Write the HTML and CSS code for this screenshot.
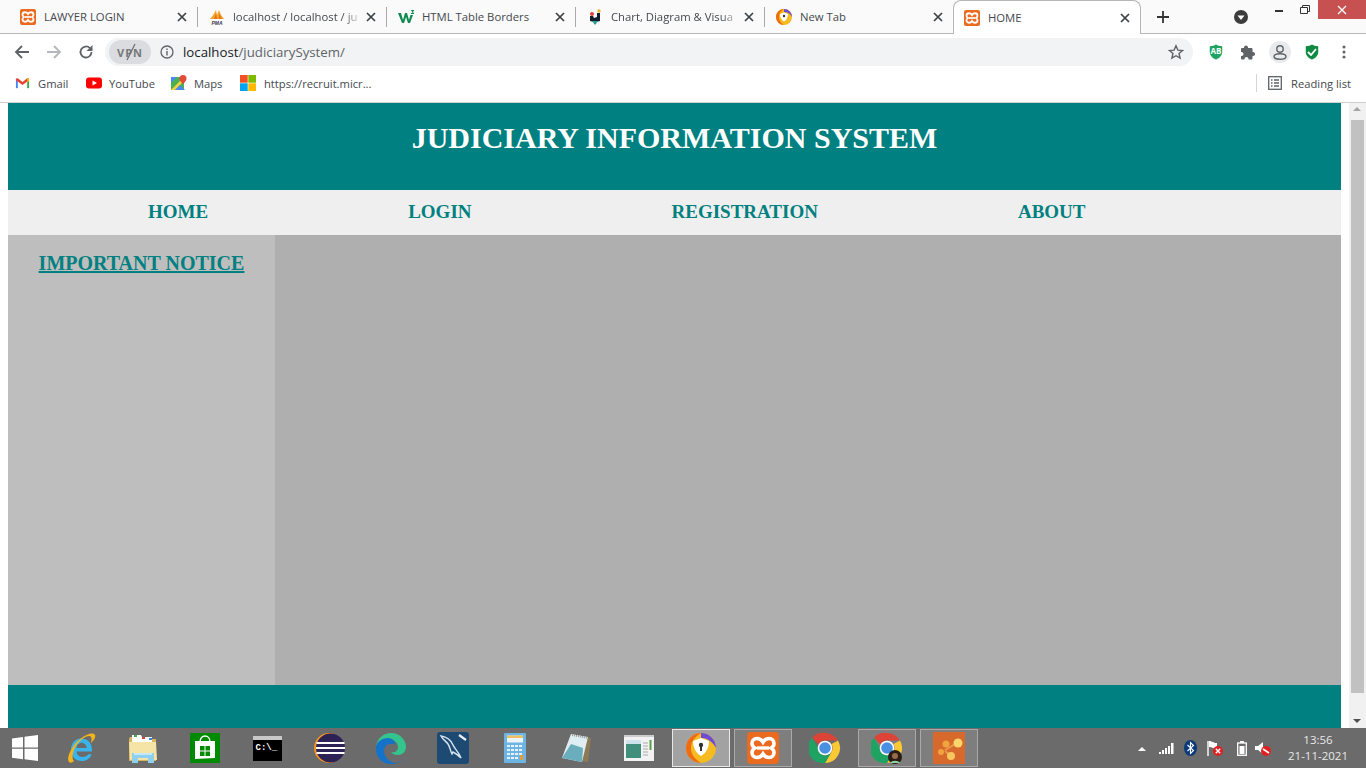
FILE: index.html
```html
<!DOCTYPE html>
<html lang="en">
<head>
<meta charset="utf-8">
<title>HOME</title>
<link rel="stylesheet" href="styles.css">
</head>
<body>
<svg class="defs" width="0" height="0" aria-hidden="true">
  <symbol id="xampp" viewBox="0 0 32 32">
    <rect width="32" height="32" rx="4" fill="#ea6b1f"/>
    <path d="M10 6.500c3 0 4.500 1 6 3.500 1.500-2.500 3-3.500 6-3.500 3.500 0 5 2.500 5 5 0 2-1 3.500-3 4.500 2 1 3 2.500 3 4.500 0 2.500-1.500 5-5 5-3 0-4.500-1-6-3.500-1.500 2.500-3 3.500-6 3.500-3.500 0-5-2.500-5-5 0-2 1-3.500 3-4.500-2-1-3-2.500-3-4.500 0-2.500 1.500-5 5-5z" fill="none" stroke="#fff" stroke-width="3.600"/>
    <path d="M10 16h12" stroke="#fff" stroke-width="3.400"/>
  </symbol>
  <symbol id="chrome" viewBox="0 0 32 32">
    <path d="M16 1a15 15 0 0 1 13 7.500H16a7.500 7.500 0 0 0-6.500 3.750L3 5.800A15 15 0 0 1 16 1z" fill="#db4437"/>
    <path d="M29 8.500A15 15 0 0 1 16 31l6.500-11.250A7.500 7.500 0 0 0 22.500 12z" fill="#fcc934"/>
    <path d="M3 5.800l6.500 11.250A7.500 7.500 0 0 0 16 23.500c2.500 0 5-1.300 6.500-3.750L16 31A15 15 0 0 1 3 5.800z" fill="#1ea362"/>
    <circle cx="16" cy="16" r="7.300" fill="#fff"/><circle cx="16" cy="16" r="5.800" fill="#4a90e2"/>
  </symbol>
  <symbol id="shield" viewBox="0 0 16 18">
    <path d="M1 2.500C4 2.500 6 1.500 8 .5c2 1 4 2 7 2v6.500c0 4-3 7-7 8.500-4-1.500-7-4.500-7-8.500z"/>
  </symbol>
  <symbol id="close" viewBox="0 0 10 10">
    <path d="M1 1l8 8M9 1l-8 8" stroke="#3c4043" stroke-width="1.700" fill="none"/>
  </symbol>
</svg>

<header class="tabstrip">
  <div class="tab"><svg class="fav"><use href="#xampp"/></svg><span class="tab-title">LAWYER LOGIN</span><svg class="tab-x"><use href="#close"/></svg></div>
  <div class="tab">
    <svg class="fav" viewBox="0 0 16 16"><path d="M1 10C3 8 5 5 7 1l1 5 2-5 2 5 3 4z" fill="#f5a62a"/><path d="M5 10l2-6 1 6zM10 10V4l3 6z" fill="#e9701b"/><text class="pma" x="8" y="15.500" text-anchor="middle">PMA</text></svg>
    <span class="tab-title tab-cut">localhost / localhost / ju</span><svg class="tab-x"><use href="#close"/></svg></div>
  <div class="tab">
    <svg class="fav" viewBox="0 0 16 16"><path d="M0 4h3l2 7 2-7h2l2 7 1.500-5H15l-3 8H10L8 8l-2 6H4z" fill="#0e8a4f"/><path d="M13 1h3v1l-1.500 1L16 4v1h-3V4h1.500z" fill="#0e8a4f"/></svg>
    <span class="tab-title">HTML Table Borders</span><svg class="tab-x"><use href="#close"/></svg></div>
  <div class="tab">
    <svg class="fav" viewBox="0 0 16 16"><circle cx="12" cy="2" r="1.700" fill="#f0b429"/><circle cx="5" cy="5" r="2" fill="#e0413f"/><path d="M3 7h3l1 2 3-1V4h3v8l-4 1v2H7v-2l-4-1z" fill="#14202e"/><path d="M5 12h6l-3 4z" fill="#2aa198"/></svg>
    <span class="tab-title tab-cut">Chart, Diagram &amp; Visua</span><svg class="tab-x"><use href="#close"/></svg></div>
  <div class="tab tab-last">
    <svg class="fav" viewBox="0 0 16 16"><circle cx="8" cy="8" r="8" fill="#f5bb20"/><path d="M8 0a8 8 0 0 1 8 8c-2-4-5-5-8-5z" fill="#6f4bd8"/><path d="M0 8a8 8 0 0 1 8-8C5 2 3 4 3 8s2 6 5 8a8 8 0 0 1-8-8z" fill="#ef6c12"/><path d="M8 3.500l4 1.500c0 3.500-1.500 6-4 7.500C5.500 11 4 8.500 4 5z" fill="#fff"/><circle cx="8" cy="7" r="1.200" fill="#333"/></svg>
    <span class="tab-title">New Tab</span><svg class="tab-x"><use href="#close"/></svg></div>
  <div class="tab tab-active"><svg class="fav"><use href="#xampp"/></svg><span class="tab-title">HOME</span><svg class="tab-x"><use href="#close"/></svg></div>
  <svg class="new-tab" viewBox="0 0 14 14"><path d="M7 1v12M1 7h12" stroke="#333" stroke-width="1.800"/></svg>
  <svg class="media" viewBox="0 0 14 14"><circle cx="7" cy="7" r="7" fill="#3c3c3c"/><path d="M3.500 5.500h7L7 10z" fill="#fff"/></svg>
  <div class="win-controls">
    <svg class="win-btn" viewBox="0 0 26 20"><rect x="9" y="10" width="8" height="2" fill="#333"/></svg>
    <svg class="win-btn" viewBox="0 0 26 20"><path d="M8.500 7.500h7v6h-7zM10.500 7.500v-2h7v6h-2" fill="none" stroke="#333"/></svg>
    <div class="win-close"><svg viewBox="0 0 10 10" width="10" height="10"><path d="M1 1l8 8M9 1l-8 8" stroke="#fff" stroke-width="1.300"/></svg></div>
  </div>
</header>

<nav class="toolbar">
  <svg class="tb-ico" viewBox="0 0 16 16"><path d="M15 8H2M8 2L2 8l6 6" fill="none" stroke="#5f6368" stroke-width="1.800"/></svg>
  <svg class="tb-ico" viewBox="0 0 16 16"><path d="M1 8h13M8 2l6 6-6 6" fill="none" stroke="#b4b7bb" stroke-width="1.800"/></svg>
  <svg class="tb-ico" viewBox="0 0 16 16"><path d="M13.500 8a5.500 5.500 0 1 1-1.600-3.900" fill="none" stroke="#5f6368" stroke-width="1.800"/><path d="M14.500 1v6h-6z" fill="#5f6368"/></svg>
  <div class="omnibox">
    <div class="vpn"><span class="vpn-text">VPN</span><svg class="vpn-slash" viewBox="0 0 10 18"><path d="M9 1L1 17" stroke="#6b6e72" stroke-width="1.300"/></svg></div>
    <svg class="info" viewBox="0 0 14 14"><circle cx="7" cy="7" r="6" fill="none" stroke="#5f6368" stroke-width="1.300"/><rect x="6.300" y="6" width="1.400" height="4.500" fill="#5f6368"/><rect x="6.300" y="3.500" width="1.400" height="1.500" fill="#5f6368"/></svg>
    <span class="url">localhost<span class="url-path">/judiciarySystem/</span></span>
    <svg class="star" viewBox="0 0 16 16"><path d="M8 1.800l1.900 4.300 4.600.4-3.500 3 1.100 4.600L8 11.700l-4.100 2.400L5 9.500l-3.500-3 4.600-.4z" fill="none" stroke="#5f6368" stroke-width="1.400"/></svg>
  </div>
  <div class="ext">
    <div class="ext-slot"><svg class="ico16 green1" viewBox="0 0 16 18"><use href="#shield"/></svg><span class="ab">AB</span></div>
    <div class="ext-slot"><svg class="ico16" viewBox="0 0 16 16"><path d="M6 1.500c1.300 0 2 1 2 2V4h3.500c.5 0 1 .5 1 1v3h.5c1.300 0 2 1 2 2s-.7 2-2 2h-.5v2.500c0 .5-.5 1-1 1H8.500V15c0-1.200-1-2-2-2s-2 .8-2 2v.5H2c-.5 0-1-.5-1-1V12h.5C2.700 12 3.500 11 3.500 10S2.700 8 1.500 8H1V5c0-.5.5-1 1-1h2v-.5c0-1 .7-2 2-2z" fill="#5f6368"/></svg></div>
    <div class="ext-slot profile"><svg class="ico16" viewBox="0 0 16 16"><circle cx="8" cy="5" r="3.200" fill="none" stroke="#5f6368" stroke-width="1.400"/><ellipse cx="8" cy="12.500" rx="6" ry="2.800" fill="none" stroke="#5f6368" stroke-width="1.400"/></svg></div>
    <div class="ext-slot"><svg class="ico16 green2" viewBox="0 0 16 18"><use href="#shield"/></svg><svg class="check" viewBox="0 0 10 8"><path d="M1 4l3 3 5-6" fill="none" stroke="#fff" stroke-width="1.800"/></svg></div>
    <div class="ext-slot"><svg class="ico16" viewBox="0 0 16 16"><circle cx="8" cy="3" r="1.500" fill="#5f6368"/><circle cx="8" cy="8" r="1.500" fill="#5f6368"/><circle cx="8" cy="13" r="1.500" fill="#5f6368"/></svg></div>
  </div>
</nav>

<div class="bookmarks">
  <div class="bm bm-gmail"><svg class="bm-ico" viewBox="0 0 16 16"><path d="M1 3.500h2v10H1z" fill="#4285f4"/><path d="M13 3.500h2v10h-2z" fill="#34a853"/><path d="M1 3.500l2-.5 5 4 5-4 2 .5V5L8 10 1 5z" fill="#ea4335"/><path d="M13 3.200l2 .3V6l-2 1.500z" fill="#fbbc04"/></svg><span>Gmail</span></div>
  <div class="bm bm-yt"><svg class="bm-ico" viewBox="0 0 16 16"><rect y="2.500" width="16" height="11" rx="3" fill="#f00"/><path d="M6.500 5.500L11 8l-4.500 2.500z" fill="#fff"/></svg><span>YouTube</span></div>
  <div class="bm bm-maps"><svg class="bm-ico" viewBox="0 0 16 16"><rect y="2" width="13" height="13" fill="#4caf50"/><path d="M0 15L13 2v4L4 15z" fill="#f5d33c"/><path d="M4 15l5-5 5 5z" fill="#4a89f3"/><path d="M0 2h6L0 8z" fill="#4a89f3"/><path d="M12 0a3.500 3.500 0 0 1 3.500 3.500C15.500 6 12 9 12 9S8.500 6 8.500 3.500A3.500 3.500 0 0 1 12 0z" fill="#e5493a"/></svg><span>Maps</span></div>
  <div class="bm bm-ms"><svg class="bm-ico" viewBox="0 0 16 16"><rect width="7.700" height="7.700" fill="#f25022"/><rect x="8.300" width="7.700" height="7.700" fill="#7fba00"/><rect y="8.300" width="7.700" height="7.700" fill="#00a4ef"/><rect x="8.300" y="8.300" width="7.700" height="7.700" fill="#ffb900"/></svg><span>https://recruit.micr...</span></div>
  <div class="reading"><svg class="read-ico" viewBox="0 0 14 14"><rect x=".7" y=".7" width="12.600" height="12.600" fill="none" stroke="#5f6368" stroke-width="1.300"/><path d="M3 4h1.500M3 7h1.500M3 10h1.500M6 4h5M6 7h5M6 10h5" stroke="#5f6368" stroke-width="1.300"/></svg><span>Reading list</span></div>
</div>

<div class="viewport">
  <div class="page">
    <div class="site-head"><h1>JUDICIARY INFORMATION SYSTEM</h1></div>
    <ul class="site-nav">
      <li><a href="#">HOME</a></li>
      <li><a href="#">LOGIN</a></li>
      <li><a href="#">REGISTRATION</a></li>
      <li><a href="#">ABOUT</a></li>
    </ul>
    <div class="site-body">
      <aside class="side"><a href="#">IMPORTANT NOTICE</a></aside>
      <main class="content"></main>
    </div>
    <div class="site-foot"></div>
  </div>
  <div class="scrollbar">
    <span class="arrow-up"></span>
    <span class="thumb"></span>
    <span class="arrow-down"></span>
  </div>
</div>

<footer class="taskbar">
  <div class="tk tk-start"><svg viewBox="0 0 26 26" width="26" height="26"><path d="M0 3.500l11-1.500v10.500H0zM12.500 1.800L26 0v12.500H12.500zM0 13.800h11v10.500L0 22.800zM12.500 13.800H26V26l-13.500-1.800z" fill="#fff"/></svg></div>
  <div class="tk"><svg viewBox="0 0 32 32" width="32" height="32"><path d="M16 6.500c6.500 0 11 4.500 11 11v2H11.500c.5 3.500 2.500 5.500 6 5.500 2.500 0 4.500-1 5.800-2.800h3.400c-1.800 4.300-5.200 6.800-9.700 6.800C10.500 29 6 24.500 6 18S10 6.500 16 6.500zm-4.500 9.500h10.300c-.3-3-2.500-5.300-5.200-5.300s-4.700 2.300-5.100 5.300z" fill="#39b4ec"/><path d="M4 30C1 26 6 15 14 8c7-6 14-8 16-5 1 2-1 5-4 8 1-4 1-7-2-7-4 0-12 6-15 14-2 5-2 9 0 11-2 2-4 2-5 1z" fill="#f4b51a"/></svg></div>
  <div class="tk"><svg viewBox="0 0 32 32" width="32" height="32"><path d="M2 7l1-2h10l2 2h14v22H2z" fill="#d9b45e"/><path d="M5 3h9l1 2h10v6H5z" fill="#fff"/><rect x="7" y="3" width="3" height="2" fill="#3fae49"/><rect x="15" y="5" width="3" height="2" fill="#d8433a"/><rect x="22" y="6" width="3" height="2" fill="#2f88d8"/><path d="M2 10h27l1 18H3z" fill="#f6e3a6"/><path d="M5 31V21h22v10h-6v-5H11v5z" fill="#8fd0ee"/><path d="M7 22h18" stroke="#d7f1fb" stroke-width="1.500"/></svg></div>
  <div class="tk"><svg viewBox="0 0 30 30" width="30" height="30"><rect width="30" height="30" fill="#008a00"/><path d="M5 8h20v17l-20 1z" fill="#fff"/><path d="M10 9c0-8 10-8 10 0" fill="none" stroke="#fff" stroke-width="1.400"/><path d="M10 13h4.500v4.500H10zM15.500 13H20v4.500h-4.500zM10 18.500h4.500V23H10zM15.500 18.500H20V23h-4.500z" fill="#008a00"/></svg></div>
  <div class="tk tk-cmd"><span class="cmd-title"></span><span class="cmd-text">C:\_</span></div>
  <div class="tk"><svg viewBox="0 0 32 32" width="32" height="32"><circle cx="16" cy="16" r="15" fill="#f7941e"/><circle cx="17.500" cy="16" r="14.500" fill="#2c2255"/><path d="M3.500 11h28M3 16h29M3.500 21h28" stroke="#fff" stroke-width="1.800"/></svg></div>
  <div class="tk"><svg viewBox="0 0 32 32" width="32" height="32"><path d="M1 15C2 6 9 1 16 1c9 0 15 7 15 14 0 5-4 8-8 8-3 0-6-1-7-3 4 1 7-1 7-5 0-5-5-8-9-8C7 7 2 11 1 15z" fill="#34c48e"/><path d="M1 15C2 9 8 6 13 6c5 0 8 4 7 7-5-3-11 0-11 6 0 5 4 10 10 12 5 0 8-2 9-4-3 4-7 5-12 5C7 32 0 25 1 15z" fill="#1473c9"/></svg></div>
  <div class="tk"><svg viewBox="0 0 32 32" width="32" height="32"><rect width="32" height="32" rx="3" fill="#1d4a72"/><path d="M4 4c6 1 10 4 12 9 1 3 6 7 8 13-3-3-6-5-8-6l-1 2c-2-4-2-7-4-10C9 9 6 8 4 4z" fill="none" stroke="#d5e4ee" stroke-width="1.400"/><path d="M22 3l7 5" stroke="#e8f0f5" stroke-width="2.200"/></svg></div>
  <div class="tk"><svg viewBox="0 0 22 30" width="22" height="30"><rect width="22" height="30" rx="1" fill="#6cb4e4"/><rect x="3" y="2.500" width="16" height="7" fill="#eef3f7"/><rect x="3" y="2.500" width="16" height="2.500" fill="#f0c060"/><path d="M3 13h16M3 17h16M3 21h16M3 25h12" stroke="#e9f2f9" stroke-width="2.200" stroke-dasharray="3 1"/><rect x="16" y="22" width="3" height="5" fill="#ef9a2f"/></svg></div>
  <div class="tk"><svg viewBox="0 0 32 32" width="32" height="32"><path d="M1 26L10 2l20 4-3 24z" fill="#8d7a55"/><path d="M1 26L10 2l17 3-6 25z" fill="#dfeef2"/><path d="M1 26l9-14 12 4-1 14z" fill="#6aaebd"/><path d="M11 3l16 3" stroke="#999" stroke-width="2" stroke-dasharray="1 1"/></svg></div>
  <div class="tk"><svg viewBox="0 0 30 26" width="30" height="26"><rect width="30" height="26" fill="#f2f2f2"/><rect y="0" width="30" height="2" fill="#ccc"/><rect x="2" y="5" width="15" height="18" fill="#3f8f7c"/><rect x="2" y="5" width="15" height="4" fill="#cfe2ea"/><path d="M19 8h5M19 11h5M19 14h5M19 17h5M19 20h5" stroke="#aaa"/><rect x="25.500" y="5" width="2" height="10" fill="#5aa04a"/></svg></div>
  <div class="tk tk-on tk-active"><svg viewBox="0 0 32 32" width="32" height="32"><circle cx="16" cy="16" r="15" fill="#f5bb20"/><path d="M16 1a15 15 0 0 1 15 15c-4-7-9-10-15-10z" fill="#6f4bd8"/><path d="M1 16A15 15 0 0 1 16 1C10 5 6 9 6 16s4 11 10 15A15 15 0 0 1 1 16z" fill="#ef6c12"/><path d="M16 6l8 3c0 7-3 12-8 15-5-3-8-8-8-15z" fill="#fff"/><circle cx="16" cy="13" r="2.200" fill="#333"/><rect x="15" y="14" width="2" height="5" fill="#333"/></svg></div>
  <div class="tk tk-on"><svg viewBox="0 0 32 32" width="32" height="32"><use href="#xampp"/></svg></div>
  <div class="tk"><svg viewBox="0 0 32 32" width="32" height="32"><use href="#chrome"/></svg></div>
  <div class="tk tk-on tk-avatar"><svg viewBox="0 0 32 32" width="32" height="32"><use href="#chrome"/><circle cx="24" cy="25" r="7" fill="#2b1d16"/><circle cx="24" cy="24" r="3" fill="#9a6a4a"/><path d="M19 31c2-3 8-3 10 0z" fill="#8fd0a0"/></svg></div>
  <div class="tk tk-on"><svg viewBox="0 0 32 32" width="32" height="32"><rect width="32" height="32" rx="1" fill="#d6692b"/><path d="M12 18l12-7M12 19l6 5" stroke="#e99a4a" stroke-width="2"/><circle cx="25" cy="11" r="4.500" fill="#fbd46b"/><circle cx="13" cy="12" r="3.500" fill="#f0a43e"/><circle cx="8" cy="20" r="3" fill="#f0a43e"/><circle cx="18" cy="24" r="4" fill="#f8c55e"/></svg></div>
  <div class="tray">
    <svg class="t-caret" viewBox="0 0 8 5"><path d="M0 5l4-4 4 4z" fill="#fff"/></svg>
    <svg class="t-signal" viewBox="0 0 15 11"><path d="M0 9h2v2H0zM3 7h2v4H3zM6 5h2v6H6zM9 3h2v8H9zM12 0h2.500v11H12z" fill="#fff"/></svg>
    <svg class="t-bt" viewBox="0 0 13 16"><ellipse cx="6.500" cy="8" rx="6.500" ry="8" fill="#0a3a78"/><path d="M3.500 5l6 5.500-3 3V2.500l3 3-6 5.500" fill="none" stroke="#fff" stroke-width="1.100"/></svg>
    <svg class="t-flag" viewBox="0 0 16 16"><path d="M1 1v15" stroke="#fff" stroke-width="1.400"/><path d="M2 1c3 0 4 2 8 2v6c-3 0-5-2-8-2z" fill="#fff"/><circle cx="11" cy="11" r="5" fill="#e02020"/><path d="M8.800 8.800l4.400 4.400M13.200 8.800l-4.400 4.400" stroke="#fff" stroke-width="1.400"/></svg>
    <svg class="t-bat" viewBox="0 0 10 15"><rect x=".7" y="2" width="8.600" height="12.300" fill="none" stroke="#fff" stroke-width="1.300"/><rect x="3" y="0" width="4" height="2" fill="#fff"/><rect x="2.500" y="5" width="5" height="8" fill="#fff"/></svg>
    <svg class="t-vol" viewBox="0 0 16 15"><path d="M0 5h3l5-4v12l-5-4H0z" fill="#fff"/><circle cx="11" cy="10" r="5" fill="#e02020"/><path d="M8 8l6 4" stroke="#fff" stroke-width="1.600"/></svg>
    <div class="clock"><span>13:56</span><span>21-11-2021</span></div>
  </div>
</footer>
</body>
</html>
```
FILE: styles.css
```css
* { box-sizing: border-box; }
html, body { margin: 0; height: 100%; }
body {
  display: flex;
  flex-direction: column;
  height: 100vh;
  overflow: hidden;
  font-family: "Open Sans", "Noto Sans", sans-serif;
  background: #fff;
}
.defs { display: block; height: 0; }

/* tab strip */
.tabstrip {
  display: flex;
  align-items: stretch;
  flex: 0 0 34px;
  min-height: 0;
  padding-left: 8px;
  background: #fafafa;
  border-bottom: 1px solid #b6b6b6;
}
.tab {
  position: relative;
  display: flex;
  align-items: center;
  flex: 0 0 189px;
  min-width: 0;
  padding: 0 8px 0 12px;
  font-size: 11.3px;
  color: #45494e;
}
.tab::after {
  content: "";
  position: absolute;
  right: -1px;
  top: 7px;
  height: 20px;
  width: 1px;
  background: #a9a9a9;
}
.tab-last::after, .tab-active::after { display: none; }
.tab-active {
  flex-basis: 188px;
  background: #fff;
  border: 1px solid #b6b6b6;
  border-bottom: 0;
  border-radius: 8px 8px 0 0;
  height: 34px;
  padding-left: 10px;
  padding-right: 8px;
}
.fav { flex: 0 0 16px; width: 16px; height: 16px; margin-right: 8px; }
.pma { font: italic 700 5px "Liberation Sans", sans-serif; fill: #3a3a55; }
.tab-title {
  flex: 1;
  min-width: 0;
  white-space: nowrap;
}
.tab-cut {
  -webkit-mask-image: linear-gradient(to right, #000 86%, transparent 100%);
  mask-image: linear-gradient(to right, #000 86%, transparent 100%);
}
.tab-x { flex: 0 0 14px; width: 14px; height: 10px; margin-left: 2px; }
.new-tab { flex: 0 0 14px; width: 14px; height: 14px; margin: 10px 0 0 15px; }
.media { flex: 0 0 14px; width: 14px; height: 14px; margin: 10px 0 0 64px; }
.win-controls { display: flex; margin-left: auto; align-items: flex-start; }
.win-btn { width: 26px; height: 20px; }
.win-close { display: flex; align-items: center; justify-content: center; width: 48px; height: 19px; background: #c75050; }

/* toolbar */
.toolbar {
  display: flex;
  align-items: center;
  flex: 0 0 33px;
  padding: 3px 0 0 14px;
  background: #fff;
}
.tb-ico { width: 16px; height: 16px; margin-right: 16px; }
.omnibox {
  display: flex;
  align-items: center;
  width: 1088px;
  height: 28px;
  margin-left: -5px;
  padding-left: 4px;
  background: #f1f3f4;
  border-radius: 14px;
}
.vpn {
  position: relative;
  display: flex;
  align-items: center;
  justify-content: center;
  width: 42px;
  height: 24px;
  background: #dadce0;
  border-radius: 12px;
}
.vpn-text { font-size: 11px; font-weight: 700; color: #75787c; letter-spacing: 1px; }
.vpn-slash { position: absolute; left: 17px; top: 3px; width: 10px; height: 18px; }
.info { width: 14px; height: 14px; margin: 0 9px; }
.url { font-size: 13.25px; color: #202124; flex: 1; }
.url-path { color: #5f6368; }
.star { width: 16px; height: 16px; margin-right: 9px; }
.ext { display: flex; align-items: center; margin-left: 7px; }
.ext-slot { position: relative; display: flex; align-items: center; justify-content: center; width: 32px; height: 24px; }
.ico16 { width: 16px; height: 16px; }
.green1 { fill: #1ea362; }
.green2 { fill: #0f8a43; }
.ab { position: absolute; left: 8px; right: 8px; top: 6px; text-align: center; font-size: 8px; line-height: 10px; font-weight: 700; color: #fff; }
.check { position: absolute; left: 11px; top: 8px; width: 10px; height: 8px; }
.profile::before { content: ""; position: absolute; left: 5px; top: 1px; width: 22px; height: 22px; border-radius: 50%; background: #e8eaed; }
.profile .ico16 { position: relative; }

/* bookmarks */
.bookmarks {
  display: flex;
  align-items: center;
  flex: 0 0 36px;
  padding: 0 0 3px 15px;
  background: #fff;
  border-bottom: 1px solid #d0d0d0;
  font-size: 11.2px;
  color: #45494e;
}
.bm { display: flex; align-items: center; }
.bm-ico { width: 16px; height: 16px; margin-right: 8px; }
.bm-gmail { width: 71px; }
.bm-gmail .bm-ico { width: 15px; }
.bm-yt { width: 85px; }
.bm-yt .bm-ico { margin-right: 7px; }
.bm-maps { width: 69px; }
.bm-maps .bm-ico { margin-right: 7px; }
.reading { display: flex; align-items: center; margin-left: auto; height: 18px; padding: 0 15px 0 11px; border-left: 1px solid #d5d5d5; }
.read-ico { width: 14px; height: 14px; margin-right: 9px; }

/* page */
.viewport { display: flex; flex: 1; min-height: 0; }
.page {
  display: flex;
  flex-direction: column;
  flex: 1;
  padding: 0 8px;
  background: #fff;
  font-family: "Liberation Serif", "Times New Roman", serif;
}
.site-head { flex: 0 0 87px; background: #008080; padding-top: 17px; }
.site-head h1 { margin: 0; font-size: 30px; line-height: 36px; font-weight: 700; color: #fff; text-align: center; }
.site-nav {
  display: flex;
  gap: 200px;
  flex: 0 0 45px;
  align-items: center;
  margin: 0;
  padding: 0 0 2px 140px;
  list-style: none;
  background: #efefef;
}
.site-nav a { font-size: 19px; font-weight: 700; color: #008080; text-decoration: none; }
.site-body { display: flex; flex: 0 0 450px; }
.side { flex: 0 0 267px; padding-top: 17px; text-align: center; background: #bebebe; }
.side a { font-size: 20px; font-weight: 700; color: #008080; text-decoration: underline; }
.content { flex: 1; background: #afafaf; }
.site-foot { flex: 1; background: #008080; }

.scrollbar { position: relative; flex: 0 0 17px; background: #f1f1f1; }
.thumb { position: absolute; left: 2px; right: 2px; top: 17px; height: 573px; background: #c1c1c1; }
.arrow-up, .arrow-down { position: absolute; left: 4px; width: 0; height: 0; border-left: 4px solid transparent; border-right: 4px solid transparent; }
.arrow-up { top: 4px; border-bottom: 4px solid #a3a3a3; }
.arrow-down { bottom: 5px; border-top: 4px solid #505050; }

/* taskbar */
.taskbar {
  display: flex;
  align-items: center;
  flex: 0 0 40px;
  background: #6b6b6b;
}
.tk { display: flex; align-items: center; justify-content: center; flex: 0 0 62px; height: 40px; }
.tk-start { flex-basis: 50px; }
.tk-on { position: relative; }
.tk-on::before {
  content: "";
  position: absolute;
  left: 2px;
  right: 2px;
  top: 1px;
  bottom: 1px;
  border: 1px solid #a9a9a9;
  background: #7e7e7e;
}
.tk-active::before { background: #a2a2a2; border: 1px solid #e8e8e8; }
.tk-on svg { position: relative; }
.tk-cmd { flex-direction: column; position: relative; }
.cmd-title { width: 29px; height: 4px; background: #c8c8c8; }
.cmd-text { display: block; width: 29px; height: 21px; padding: 2px 0 0 3px; background: #000; color: #fff; font: 700 9px/12px "Liberation Mono", monospace; }

.tray { display: flex; align-items: center; flex: 1; height: 40px; padding-left: 158px; }
.t-caret { flex: 0 0 8px; height: 5px; margin-right: 13px; }
.t-signal { flex: 0 0 15px; height: 11px; margin-right: 10px; }
.t-bt { flex: 0 0 13px; height: 16px; margin-right: 10px; }
.t-flag { flex: 0 0 16px; height: 16px; margin-right: 14px; }
.t-bat { flex: 0 0 10px; height: 15px; margin-right: 8px; }
.t-vol { flex: 0 0 16px; height: 15px; }
.clock { display: flex; flex-direction: column; align-items: center; flex: 0 0 62px; margin-left: 16px; font-size: 11.5px; line-height: 16px; color: #e8e8e8; white-space: nowrap; }
```
